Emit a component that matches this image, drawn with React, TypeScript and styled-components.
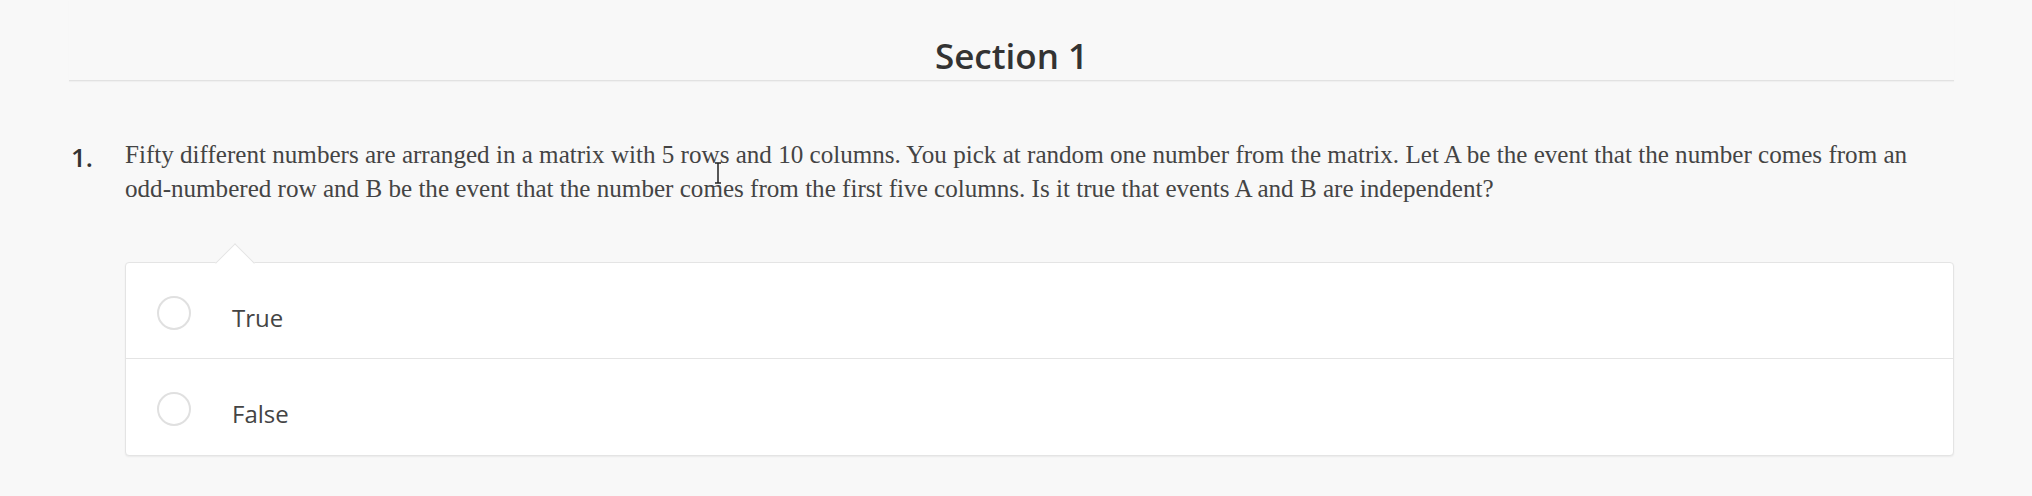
import React from "react";
import styled, { createGlobalStyle } from "styled-components";

const Global = createGlobalStyle`
  html, body { margin: 0; padding: 0; background: #f8f8f8; }
  body { font-family: "Open Sans", "Liberation Sans", sans-serif; color: #333; }
`;

const Page = styled.div`
  padding: 0 78px 40px 69px;
  position: relative;
`;

const Title = styled.h1`
  margin: 0;
  padding-top: 32px;
  font-family: "Open Sans", sans-serif;
  font-weight: 600;
  font-size: 35px;
  line-height: 48px;
  text-align: center;
  color: #333;
  border-bottom: 1px solid #e2e2e2;
  box-shadow: 0 1px 1px rgba(0, 0, 0, 0.03);
`;

const Question = styled.div`
  display: grid;
  grid-template-columns: 56px 1fr;
  margin-top: 57px;
`;

const Number = styled.div`
  font-family: "Open Sans", sans-serif;
  font-weight: 600;
  font-size: 26px;
  line-height: 33px;
  padding-top: 3px;
  padding-left: 2px;
  color: #333;
`;

const Body = styled.div`
  display: flex;
  flex-direction: column;
`;

const Prompt = styled.p`
  margin: 0;
  font-family: "Liberation Serif", "Times New Roman", serif;
  font-size: 25.1px;
  line-height: 34px;
  color: #444;
`;

const NoBreak = styled.span`
  white-space: nowrap;
`;

const Choices = styled.div`
  position: relative;
  margin-top: 56px;
  background: #fff;
  border: 1px solid #e4e4e4;
  border-radius: 4px;
  box-shadow: 0 1px 2px rgba(0, 0, 0, 0.06);

  &::before {
    content: "";
    position: absolute;
    left: 95px;
    top: -14px;
    width: 27px;
    height: 27px;
    background: #fff;
    border-top: 1px solid #e4e4e4;
    border-left: 1px solid #e4e4e4;
    transform: rotate(45deg);
  }
`;

const Choice = styled.label<{ $last?: boolean }>`
  position: relative;
  display: flex;
  align-items: flex-start;
  height: 96px;
  box-sizing: border-box;
  padding: 33px 0 0 31px;
  border-bottom: ${(p) => (p.$last ? "none" : "1px solid #e4e4e4")};
  cursor: pointer;
`;

const Radio = styled.span`
  display: block;
  width: 34px;
  height: 34px;
  box-sizing: border-box;
  border: 2px solid #e0e0e0;
  border-radius: 50%;
  background: #fff;
  flex: none;
`;

const Label = styled.span`
  margin-left: 41px;
  margin-top: 6px;
  font-family: "Open Sans", sans-serif;
  font-size: 24px;
  line-height: 32px;
  color: #444;
`;

const Cursor = styled.svg`
  position: absolute;
  left: 712px;
  top: 162px;
  pointer-events: none;
`;

export default function App() {
  return (
    <>
      <Global />
      <Page>
        <Title>Section 1</Title>
        <Question>
          <Number>1.</Number>
          <Body>
            <Prompt>
              Fifty different numbers are arranged in a matrix with 5 rows and 10 columns. You pick at random one
              number from the matrix. Let A be the event that the number comes from an{" "}
              <NoBreak>odd-numbered</NoBreak> row and B be the event that the number comes from the first five
              columns. Is it true that events A and B are independent?
            </Prompt>
            <Choices>
              <Choice>
                <Radio />
                <Label>True</Label>
              </Choice>
              <Choice $last>
                <Radio />
                <Label>False</Label>
              </Choice>
            </Choices>
          </Body>
        </Question>
        <Cursor width="12" height="22" viewBox="0 0 12 22">
          <path d="M3 1h6M6 1v20M3 21h6" stroke="#222" strokeWidth="1.5" fill="none" />
        </Cursor>
      </Page>
    </>
  );
}
